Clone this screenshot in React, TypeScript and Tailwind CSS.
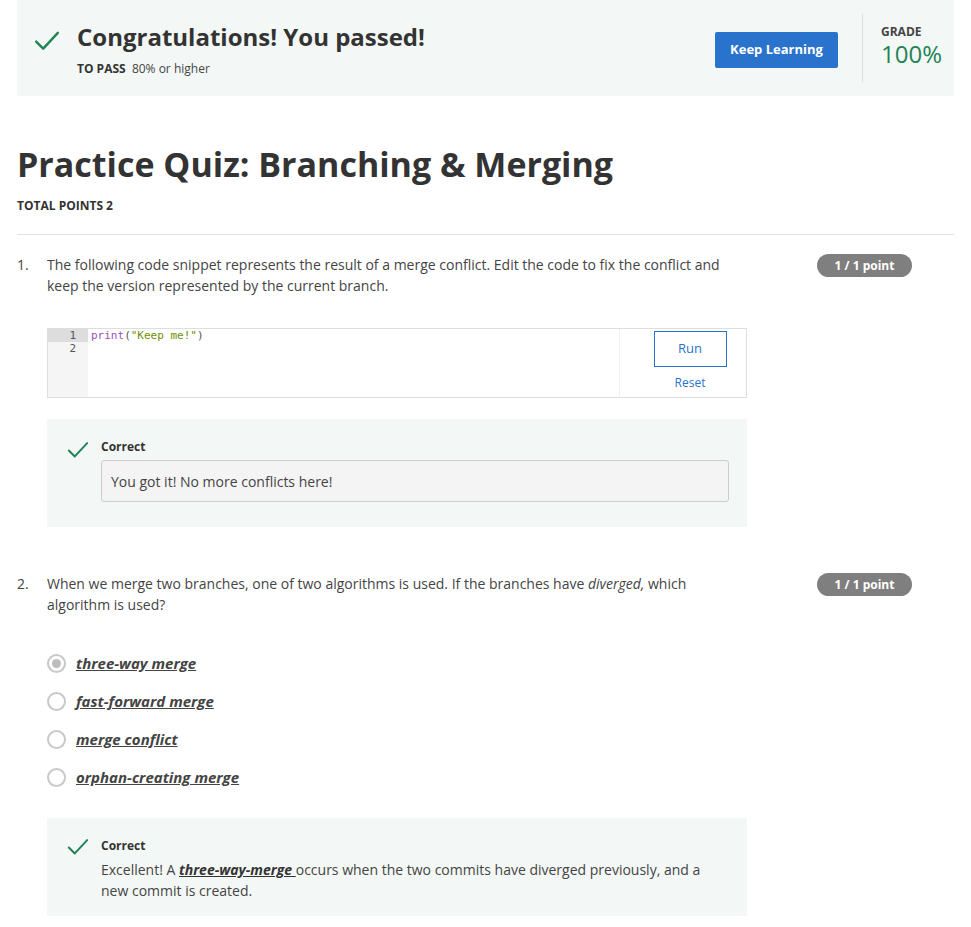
import React from "react";

function Check({ className }: { className: string }) {
    return (
        <svg viewBox="0 0 24 24" className={className} fill="none" stroke="#1f8354" strokeWidth={2.2} strokeLinecap="round" strokeLinejoin="round">
            <path d="M2 12.5l6.5 6.5L22 4.5" />
        </svg>
    );
}

function PointPill() {
    return (
        <div className="shrink-0 w-[95px] h-[23px] rounded-full bg-[#7f7f7f] text-white text-[12px] font-bold flex items-center justify-center">
            1 / 1 point
        </div>
    );
}

function Radio({ checked }: { checked?: boolean }) {
    return (
        <span className="w-[19px] h-[19px] rounded-full border-2 border-[#c8c8c8] bg-white flex items-center justify-center shrink-0">
            {checked && <span className="w-[9px] h-[9px] rounded-full bg-[#bdbdbd]" />}
        </span>
    );
}

export default function App() {
    const options = ["three-way merge", "fast-forward merge", "merge conflict", "orphan-creating merge"];

    return (
        <div className="w-[971px] min-h-[927px] bg-white text-[#333] font-['Open_Sans',sans-serif] px-[17px] pb-[11px] overflow-hidden">
            {/* Banner */}
            <div className="h-[96px] bg-[#f3f8f6] flex items-start pl-[17px] pr-[12px]">
                <Check className="w-[26px] h-[26px] mt-[28px]" />
                <div className="ml-[17px] mt-[20px] flex-1">
                    <h1 className="text-[24px] font-bold leading-[34px] text-[#333]">Congratulations! You passed!</h1>
                    <p className="text-[12px] mt-[7px] text-[#444] leading-[16px]">
                        <span className="font-bold text-[#333]">TO PASS</span>&nbsp; 80% or higher
                    </p>
                </div>
                <button className="mt-[32px] w-[123px] h-[36px] rounded-[2px] bg-[#2a73cc] text-white text-[13px] font-bold">
                    Keep Learning
                </button>
                <div className="ml-[24px] mt-[14px] w-px h-[68px] bg-[#dcdcdc]" />
                <div className="ml-[18px] mt-[24px]">
                    <div className="text-[12px] font-bold text-[#444] leading-[16px]">GRADE</div>
                    <div className="text-[24px] text-[#1f8354] leading-[28px]">100%</div>
                </div>
            </div>

            {/* Title */}
            <h2 className="mt-[46px] text-[34px] font-bold leading-[44px] text-[#333]">Practice Quiz: Branching &amp; Merging</h2>
            <div className="mt-[12px] text-[12px] font-bold text-[#333] leading-[16px]">TOTAL POINTS 2</div>
            <div className="mt-[20px] h-px bg-[#e1e1e1]" />

            {/* Question 1 */}
            <div className="mt-[19px] flex items-start">
                <span className="w-[30px] text-[14px] leading-[21px] text-[#444]">1.</span>
                <div className="w-[700px]">
                    <p className="text-[14px] leading-[21px] text-[#444] pr-[20px]">
                        The following code snippet represents the result of a merge conflict. Edit the code to fix the conflict and keep the version represented by the current branch.
                    </p>
                    <div className="mt-[32px] h-[70px] border border-[#dedede] flex">
                        <div className="w-[40px] bg-[#f5f5f5] font-['DejaVu_Sans_Mono',monospace] text-[11px] leading-[13px] text-[#555]">
                            <div className="bg-[#dddddd] pr-[12px] text-right">1</div>
                            <div className="pr-[12px] text-right">2</div>
                        </div>
                        <div className="flex-1 pl-[3px] font-['DejaVu_Sans_Mono',monospace] text-[11px] leading-[13px]">
                            <span className="text-[#9a52b8]">print</span>
                            <span className="text-[#555]">(</span>
                            <span className="text-[#6f8f00]">"Keep me!"</span>
                            <span className="text-[#555]">)</span>
                        </div>
                        <div className="w-[127px] border-l border-[#f0f0f0] flex flex-col items-center pt-[2px] pl-[14px]">
                            <button className="w-[73px] h-[36px] border border-[#2a73cc] text-[#2a73cc] text-[13px]">Run</button>
                            <span className="mt-[7px] text-[12px] text-[#2a73cc]">Reset</span>
                        </div>
                    </div>
                    <div className="mt-[21px] h-[108px] bg-[#f3f8f6] pl-[20px] pr-[18px] pt-[20px] flex items-start">
                        <Check className="w-[22px] h-[22px] shrink-0" />
                        <div className="ml-[12px] flex-1">
                            <div className="text-[12px] font-bold text-[#333] leading-[15px]">Correct</div>
                            <div className="mt-[6px] h-[42px] bg-[#f4f4f4] border border-[#cccccc] rounded-[3px] px-[9px] flex items-center text-[14px] text-[#444]">
                                You got it! No more conflicts here!
                            </div>
                        </div>
                    </div>
                </div>
                <div className="ml-[70px]">
                    <PointPill />
                </div>
            </div>

            {/* Question 2 */}
            <div className="mt-[46px] flex items-start">
                <span className="w-[30px] text-[14px] leading-[21px] text-[#444]">2.</span>
                <div className="w-[700px]">
                    <p className="text-[14px] leading-[21px] text-[#444] pr-[40px]">
                        When we merge two branches, one of two algorithms is used. If the branches have <em>diverged,</em> which algorithm is used?
                    </p>
                    <div className="mt-[38px] flex flex-col gap-[17px]">
                        {options.map((o, i) => (
                            <label key={o} className="flex items-center gap-[10px] h-[21px]">
                                <Radio checked={i === 0} />
                                <span className="text-[15px] italic font-bold underline text-[#444]">{o}</span>
                            </label>
                        ))}
                    </div>
                    <div className="mt-[30px] h-[98px] bg-[#f3f8f6] pl-[20px] pr-[18px] pt-[18px] flex items-start">
                        <Check className="w-[22px] h-[22px] shrink-0" />
                        <div className="ml-[12px] flex-1">
                            <div className="text-[12px] font-bold text-[#333] leading-[15px] mt-[2px]">Correct</div>
                            <p className="mt-[6px] text-[14px] leading-[21px] text-[#444]">
                                Excellent! A <em className="font-bold underline text-[#333]">three-way-merge </em>occurs when the two commits have diverged previously, and a new commit is created.
                            </p>
                        </div>
                    </div>
                </div>
                <div className="ml-[70px]">
                    <PointPill />
                </div>
            </div>
        </div>
    );
}
